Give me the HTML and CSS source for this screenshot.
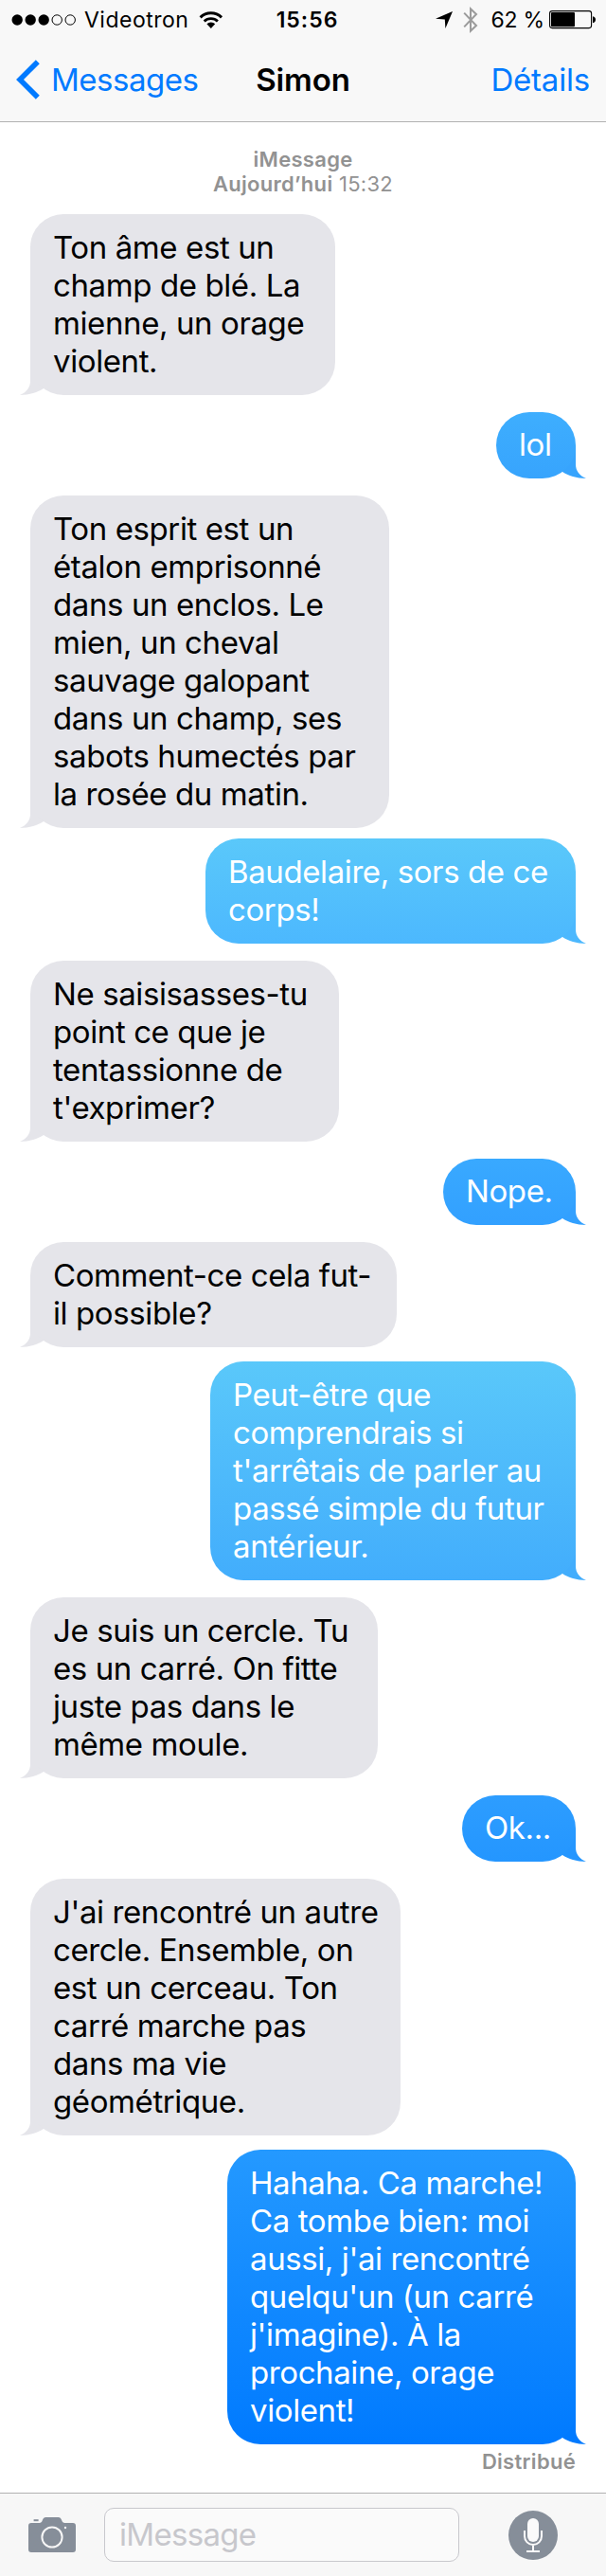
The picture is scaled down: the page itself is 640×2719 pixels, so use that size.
FILE: index.html
```
<!DOCTYPE html>
<html lang="fr">
<head>
    <meta charset="UTF-8">
    <meta name="viewport" content="width=device-width, initial-scale=1.0">
    <title>Simon - Messages</title>
    <link rel="stylesheet" href="styles.css">
</head>
<body>
    <header>
        <div class="status-bar">
            <div class="status-left">
                <svg class="signal" width="70" height="14" viewBox="0 0 70 14">
                    <circle cx="6.2" cy="7" r="5.7"/>
                    <circle cx="20.2" cy="7" r="5.7"/>
                    <circle cx="34.2" cy="7" r="5.7"/>
                    <circle class="empty" cx="48.2" cy="7" r="5.2"/>
                    <circle class="empty" cx="62.2" cy="7" r="5.2"/>
                </svg>
                <span class="carrier">Videotron</span>
                <svg class="wifi" width="26" height="20" viewBox="0 0 26 20">
                    <path d="M1.6 7.4a16 16 0 0 1 22.4 0" fill="none" stroke="#000" stroke-width="3"/>
                    <path d="M5.7 11.6a10.2 10.2 0 0 1 14.2 0" fill="none" stroke="#000" stroke-width="2.8"/>
                    <path d="M8.4 14.3a6.4 6.4 0 0 1 8.8 0L12.8 18.9z"/>
                </svg>
            </div>
            <span class="time">15:56</span>
            <div class="status-right">
                <svg class="location" width="18" height="18" viewBox="0 0 18 18">
                    <path d="M18 0L10.4 18L9.8 8.4L0 7.7z"/>
                </svg>
                <svg class="bluetooth" width="16" height="28" viewBox="0 0 16 28">
                    <path d="M1.2 6.6L14 20L8 25.6V2.4L14 8L1.2 21.4" fill="none" stroke="#9b9b9b" stroke-width="2"/>
                </svg>
                <span class="percent">62 %</span>
                <svg class="battery" width="50" height="20" viewBox="0 0 50 20">
                    <rect x="0.6" y="0.6" width="44" height="18" rx="2.5" fill="none" stroke="#000" stroke-width="1.1"/>
                    <rect x="2" y="2" width="25" height="15.2" rx="1"/>
                    <path d="M46 6.2c4 .6 4 6.4 0 7z"/>
                </svg>
            </div>
        </div>
        <nav>
            <a href="#messages" class="back">
                <svg width="26" height="42" viewBox="0 0 26 42">
                    <path d="M22.8 2.2L4 21L22.8 39.8" fill="none" stroke="#007aff" stroke-width="5.6"/>
                </svg>
                <span>Messages</span>
            </a>
            <h1>Simon</h1>
            <a href="#details" class="details">Détails</a>
        </nav>
    </header>

    <main>
        <div class="timestamp"><b>iMessage</b><br><b>Aujourd’hui</b> 15:32</div>

        <div class="bubble from" style="width: 322px">Ton âme est un<br>champ de blé. La<br>mienne, un orage<br>violent.</div>
        <div class="bubble to short b-lol" style="width: 84px">lol</div>
        <div class="bubble from" style="width: 379px">Ton esprit est un<br>étalon emprisonné<br>dans un enclos. Le<br>mien, un cheval<br>sauvage galopant<br>dans un champ, ses<br>sabots humectés par<br>la rosée du matin.</div>
        <div class="bubble to b-corps" style="width: 391px">Baudelaire, sors de ce<br>corps!</div>
        <div class="bubble from" style="width: 326px">Ne saisisasses-tu<br>point ce que je<br>tentassionne de<br>t'exprimer?</div>
        <div class="bubble to short b-nope" style="width: 140px">Nope.</div>
        <div class="bubble from" style="width: 387px">Comment-ce cela fut-<br>il possible?</div>
        <div class="bubble to b-futur" style="width: 386px">Peut-être que<br>comprendrais si<br>t'arrêtais de parler au<br>passé simple du futur<br>antérieur.</div>
        <div class="bubble from" style="width: 367px">Je suis un cercle. Tu<br>es un carré. On fitte<br>juste pas dans le<br>même moule.</div>
        <div class="bubble to short b-ok" style="width: 120px">Ok...</div>
        <div class="bubble from" style="width: 391px">J'ai rencontré un autre<br>cercle. Ensemble, on<br>est un cerceau. Ton<br>carré marche pas<br>dans ma vie<br>géométrique.</div>
        <div class="bubble to b-last" style="width: 368px">Hahaha. Ca marche!<br>Ca tombe bien: moi<br>aussi, j'ai rencontré<br>quelqu'un (un carré<br>j'imagine). À la<br>prochaine, orage<br>violent!</div>

        <div class="delivered">Distribué</div>
    </main>

    <footer>
        <svg class="camera" width="50" height="38" viewBox="0 0 50 38">
            <rect x="5.6" y="2.2" width="5" height="2" fill="#868e99"/>
            <path d="M3 6h8.5c2 0 2.5-1 3.3-2.7C15.8 1 16.5 0 18.5 0h13c2 0 2.7 1 3.7 3.3C36 5 36.5 6 38.5 6H47a3 3 0 0 1 3 3v25a3 3 0 0 1-3 3H3a3 3 0 0 1-3-3V9a3 3 0 0 1 3-3z" fill="#868e99"/>
            <circle cx="25" cy="21" r="10.6" fill="none" stroke="#f7f7f7" stroke-width="2"/>
            <circle cx="39" cy="11" r="1.2" fill="#f7f7f7"/>
        </svg>
        <div class="field">iMessage</div>
        <svg class="mic" width="52" height="52" viewBox="0 0 52 52">
            <circle cx="26" cy="26" r="26" fill="#868e99"/>
            <rect x="20" y="8" width="12" height="25" rx="6" fill="#fafafa"/>
            <path d="M17 21v6a9 9 0 0 0 18 0v-6M26 36v7M19 43h14" fill="none" stroke="#fafafa" stroke-width="2"/>
        </svg>
    </footer>
</body>
</html>
```
FILE: styles.css
```
* {
    margin: 0;
    padding: 0;
    box-sizing: border-box;
}

body {
    font-family: Inter, Roboto, sans-serif;
    background-color: #fff;
    color: #000;
    width: 640px;
}

svg {
    display: block;
    flex-shrink: 0;
}

header {
    height: 129px;
    background-color: #f8f8f8;
    border-bottom: 1px solid #b2b2b2;
}

.status-bar {
    display: grid;
    grid-template-columns: 1fr auto 1fr;
    align-items: center;
    height: 41px;
    padding: 0 10px 0 12px;
    font-size: 23px;
}

.status-left,
.status-right {
    display: flex;
    align-items: center;
}

.status-right {
    justify-content: flex-end;
}

.signal .empty {
    fill: none;
    stroke: #000;
    stroke-width: 1;
}

.carrier {
    margin-left: 7px;
    letter-spacing: 0.5px;
}

.wifi {
    margin-left: 11px;
}

.time {
    margin-left: 7px;
    font-weight: 600;
    letter-spacing: 1px;
}

.bluetooth {
    margin-left: 11px;
}

.percent {
    margin-left: 13px;
    white-space: nowrap;
    letter-spacing: -0.2px;
}

.battery {
    margin-left: 5px;
}

nav {
    display: grid;
    grid-template-columns: 1fr auto 1fr;
    align-items: center;
    height: 86px;
    padding: 0 17px;
    font-size: 33px;
    letter-spacing: -0.5px;
}

nav a {
    color: #007aff;
    text-decoration: none;
}

.back {
    display: flex;
    align-items: center;
    gap: 11px;
}

h1 {
    font-size: 33px;
    font-weight: 600;
    letter-spacing: -0.1px;
}

.details {
    justify-self: end;
    letter-spacing: -0.2px;
}

main {
    display: flex;
    flex-direction: column;
    padding: 26px 32px 0;
    height: 2502px;
    isolation: isolate;
}

.timestamp {
    height: 71px;
    text-align: center;
    color: #929292;
    font-size: 22px;
    line-height: 26px;
    letter-spacing: 0.3px;
}

.timestamp b {
    font-weight: 600;
}

.bubble {
    position: relative;
    padding: 15px 0 16px 24px;
    margin-bottom: 18px;
    border-radius: 35px;
    font-size: 33px;
    line-height: 40px;
    letter-spacing: -0.4px;
    white-space: nowrap;
}

/* little tail at the bottom corner, sits behind the bubble */
.bubble::after {
    content: "";
    position: absolute;
    z-index: -1;
    bottom: 0;
    left: -11px;
    width: 46px;
    height: 35px;
    background-color: #e5e5ea;
    clip-path: path("M11 0V20C11 27 7 32 0 35C10 35 19 32 25 28L46 0Z");
}

.from {
    align-self: flex-start;
    background-color: #e5e5ea;
}

.to {
    align-self: flex-end;
    color: #fff;
    background-image: linear-gradient(var(--top), var(--bottom));
}

.to::after {
    left: auto;
    right: -11px;
    background-color: var(--bottom);
    transform: scaleX(-1);
}

.short {
    padding-top: 14px;
}

/* the blue gets darker further down the thread */
.b-lol {
    --top: #3eaefe;
    --bottom: #37a4fd;
}

.b-corps {
    --top: #5ac8fa;
    --bottom: #4cb8fe;
}

.b-nope {
    --top: #39a9ff;
    --bottom: #32a0ff;
}

.b-futur {
    --top: #5ac8fa;
    --bottom: #42adfc;
}

.b-ok {
    --top: #2d9dff;
    --bottom: #2496ff;
}

.b-last {
    --top: #2499ff;
    --bottom: #007aff;
}

.from:has(+ .b-corps) {
    margin-bottom: 11px;
}

.from:has(+ .b-futur),
.from:has(+ .b-last) {
    margin-bottom: 15px;
}

.b-last {
    margin-bottom: 5px;
}

.delivered {
    align-self: flex-end;
    color: #929292;
    font-size: 22px;
    font-weight: 600;
    line-height: 26px;
    letter-spacing: 0.3px;
}

footer {
    display: flex;
    align-items: center;
    height: 88px;
    padding-left: 30px;
    background-color: #f7f7f7;
    border-top: 1px solid #b2b2b2;
}

.field {
    width: 375px;
    height: 57px;
    margin-left: 30px;
    padding-left: 15px;
    border: 1px solid #c8c8cd;
    border-radius: 10px;
    background-color: #fafafa;
    color: #c7c7cc;
    font-size: 33px;
    line-height: 55px;
    letter-spacing: -0.7px;
}

.mic {
    margin-left: 52px;
}
```
